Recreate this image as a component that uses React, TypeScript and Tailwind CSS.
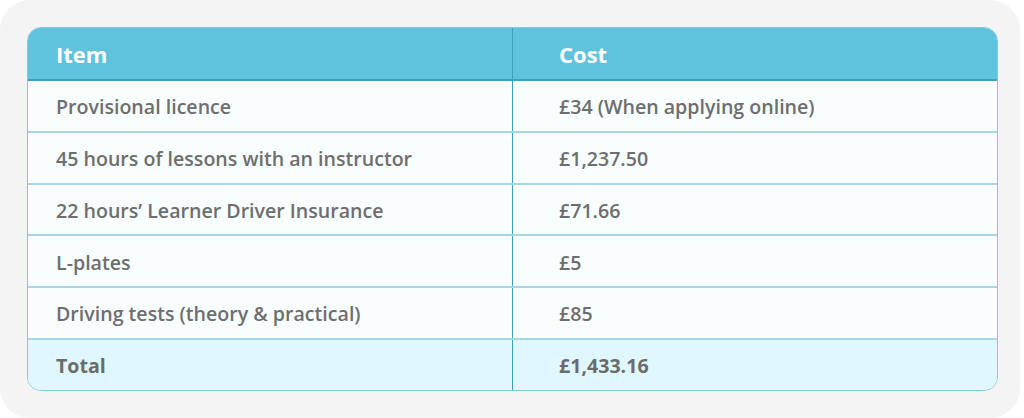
import React from "react";

interface Row {
    item: string;
    cost: string;
}

const rows: Row[] = [
    { item: "Provisional licence", cost: "£34 (When applying online)" },
    { item: "45 hours of lessons with an instructor", cost: "£1,237.50" },
    { item: "22 hours’ Learner Driver Insurance", cost: "£71.66" },
    { item: "L-plates", cost: "£5" },
    { item: "Driving tests (theory & practical)", cost: "£85" },
];

export default function App() {
    return (
        <div className="w-[1024px] h-[418px] bg-white" style={{ fontFamily: "'Open Sans', Lato, sans-serif" }}>
            <div className="w-[1020px] h-[418px] rounded-[30px] bg-[#f4f4f4] pt-[27px] pl-[27px]">
                <div className="w-[971px] rounded-[14px] border border-[#85c9d8] overflow-hidden">
                    {/* header */}
                    <div className="grid grid-cols-[485px_1fr] h-[53px] bg-[#5fc3de] border-b-2 border-[#3aa2bb] text-white text-[22px] font-bold">
                        <div className="flex items-center pl-[28px] pt-[2px] border-r border-[#3aa2bb]">Item</div>
                        <div className="flex items-center pl-[46px] pt-[2px]">Cost</div>
                    </div>
                    {rows.map((r, i) => (
                        <div
                            key={i}
                            className="grid grid-cols-[485px_1fr] h-[51.8px] bg-[#f8fdfe] border-b-2 border-[#a5d8e3] text-[#6e6e6e] text-[19.6px] font-semibold"
                        >
                            <div className="flex items-center pl-[28px] pt-[2px] border-r border-[#3aa2bb]">{r.item}</div>
                            <div className="flex items-center pl-[46px] pt-[2px]">{r.cost}</div>
                        </div>
                    ))}
                    {/* total */}
                    <div className="grid grid-cols-[485px_1fr] h-[50px] bg-[#e0f8fd] text-[#6b6b6b] text-[19.6px] font-bold">
                        <div className="flex items-center pl-[28px] pt-[2px] border-r border-[#3aa2bb]">Total</div>
                        <div className="flex items-center pl-[46px] pt-[2px]">£1,433.16</div>
                    </div>
                </div>
            </div>
        </div>
    );
}
